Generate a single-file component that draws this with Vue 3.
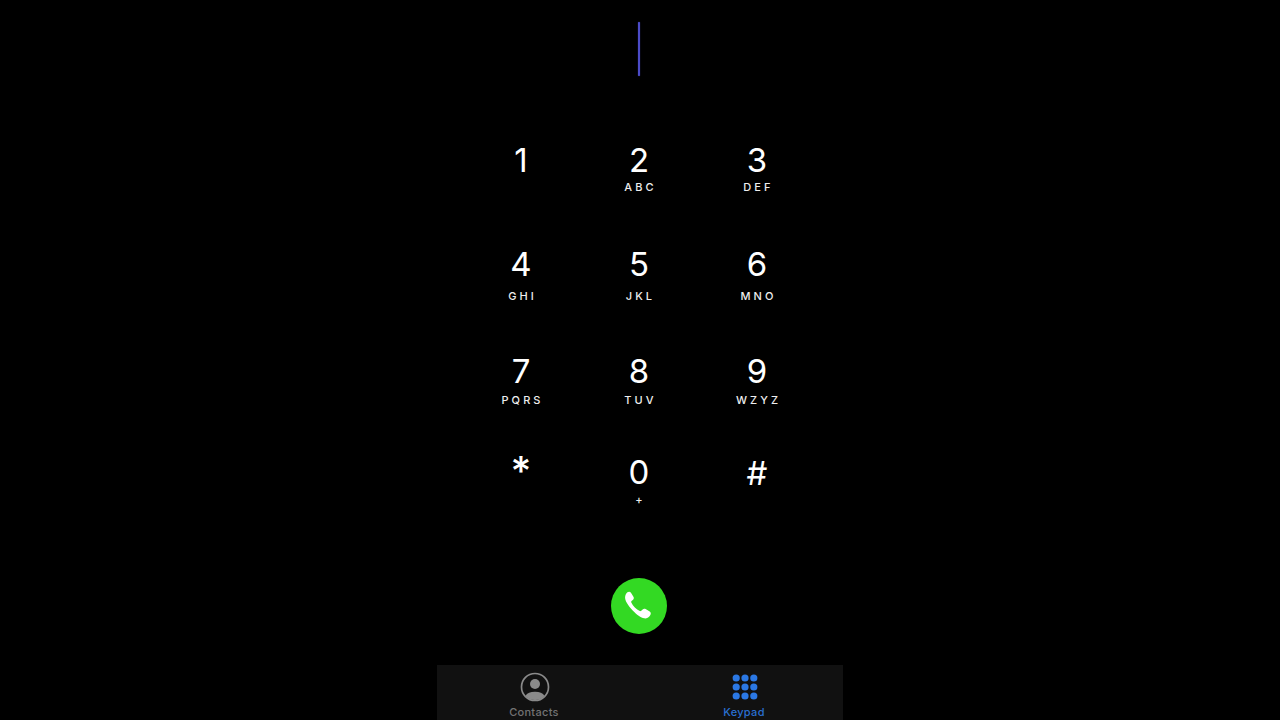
<template>
  <div class="screen">
    <div class="phone">
      <div class="entry">
        <span class="caret"></span>
      </div>

      <div class="keypad">
        <button
          v-for="key in keys"
          :key="key.digit"
          :class="['key', `key--${key.name}`]"
        >
          <span :class="['key__digit', { 'key__digit--star': key.digit === '*', 'key__digit--hash': key.digit === '#' }]">{{ key.digit }}</span>
          <span class="key__letters">{{ key.letters }}</span>
        </button>
      </div>

      <div class="call-row">
        <button class="call">
          <svg viewBox="0 0 28 28" width="30" height="30">
            <path
              fill="#fff"
              d="M3.2 1.2c1.2-.8 2.600-.6 3.300.5l2.300 3.600c.6 1 .5 2-.3 2.800L7 9.400c-.4.400-.4.800-.2 1.300.9 1.900 2 3.400 3.300 4.800 1.400 1.300 2.900 2.400 4.700 3.200.5.200.9.200 1.300-.2l1.300-1.300c.8-.8 1.800-.9 2.800-.3l3.800 2.300c1.100.7 1.300 2 .6 3.200-.9 1.500-2.300 3.200-4.500 3.200-3 0-6.900-2.400-10.500-6C5.900 15.900 1 10 1 6.200 1 4.300 1.900 2.200 3.200 1.200z"
            />
          </svg>
        </button>
      </div>

      <nav class="tabs">
        <div class="tab">
          <svg class="tab__icon" viewBox="0 0 30 30" width="30" height="30">
            <circle cx="15" cy="15" r="13.5" fill="none" stroke="#8a8a8a" stroke-width="1.7" />
            <circle cx="15" cy="12" r="5" fill="#8a8a8a" />
            <path fill="#8a8a8a" d="M5.400 24c1.600-2.900 5-4.200 9.600-4.200s8 1.300 9.600 4.200A13 13 0 0 1 15 28a13 13 0 0 1-9.600-4z" />
          </svg>
          <span class="tab__label">Contacts</span>
        </div>
        <div class="tab tab--active">
          <svg class="tab__icon" viewBox="0 0 30 30" width="30" height="30">
            <template v-for="y in [6, 15, 24]" :key="y">
              <circle v-for="x in [6.2, 15, 23.8]" :key="x" :cx="x" :cy="y" r="3.600" fill="#2b78e4" />
            </template>
          </svg>
          <span class="tab__label">Keypad</span>
        </div>
      </nav>
    </div>
  </div>
</template>

<script setup>
const keys = [
  { digit: '1', letters: '', name: 'r1' },
  { digit: '2', letters: 'ABC', name: 'r1' },
  { digit: '3', letters: 'DEF', name: 'r1' },
  { digit: '4', letters: 'GHI', name: 'r2' },
  { digit: '5', letters: 'JKL', name: 'r2' },
  { digit: '6', letters: 'MNO', name: 'r2' },
  { digit: '7', letters: 'PQRS', name: 'r3' },
  { digit: '8', letters: 'TUV', name: 'r3' },
  { digit: '9', letters: 'WZYZ', name: 'r3' },
  { digit: '*', letters: '', name: 'r4' },
  { digit: '0', letters: '+', name: 'r4' },
  { digit: '#', letters: '', name: 'r4' },
]
</script>

<style>
html,
body {
  margin: 0;
  background: #000;
}
</style>

<style scoped>
.screen {
  display: flex;
  justify-content: center;
  width: 1280px;
  height: 720px;
  overflow: hidden;
  background: #000;
  font-family: Inter, 'Liberation Sans', sans-serif;
}

.phone {
  display: flex;
  flex-direction: column;
  width: 406px;
  height: 720px;
}

.entry {
  display: flex;
  justify-content: center;
  height: 140px;
  padding: 22px 2px 0 0;
  box-sizing: border-box;
}

.caret {
  width: 2px;
  height: 54px;
  background: #4c4cc8;
  border-radius: 1px;
  box-shadow: 0 0 1px #4a4ad2;
}

.keypad {
  display: grid;
  grid-template-columns: repeat(3, 118px);
  grid-template-rows: 104px 107px 101px 105px;
  justify-content: center;
  height: 417px;
  padding-right: 2px;
}

.key {
  display: flex;
  flex-direction: column;
  align-items: center;
  padding: 0;
  border: none;
  background: none;
  color: #fff;
  font-family: inherit;
}

.key__digit {
  height: 40px;
  font-size: 33px;
  line-height: 40px;
}

.key__digit--star {
  font-size: 40px;
  font-weight: 500;
  line-height: 37px;
}

.key__digit--hash {
  line-height: 42px;
}

.key__letters {
  height: 14px;
  padding-left: 3px;
  font-size: 11px;
  font-weight: 500;
  line-height: 14px;
  letter-spacing: 3.1px;
  color: #eee;
}

.key--r2 .key__letters {
  margin-top: 5px;
}

.key--r3 .key__letters {
  margin-top: 2px;
}

.key--r4 .key__letters {
  margin-top: 1px;
}

.call-row {
  display: flex;
  justify-content: center;
  height: 108px;
  padding: 21px 2px 0 0;
  box-sizing: border-box;
}

.call {
  display: flex;
  align-items: center;
  justify-content: center;
  width: 56px;
  height: 56px;
  padding: 0;
  border: none;
  border-radius: 50%;
  background: #33d923;
}

.tabs {
  display: grid;
  grid-template-columns: 1fr 1fr;
  column-gap: 16px;
  height: 55px;
  padding-right: 2px;
  box-sizing: border-box;
  overflow: hidden;
  background: #111;
}

.tab {
  display: flex;
  flex-direction: column;
  align-items: center;
  padding-top: 7px;
  color: #737373;
}

.tab--active {
  color: #2a70d2;
}

.tab__icon {
  margin-left: 1px;
}

.tab__label {
  margin-top: 3px;
  font-size: 11px;
  font-weight: 500;
  line-height: 14px;
  letter-spacing: 0.3px;
}
</style>
